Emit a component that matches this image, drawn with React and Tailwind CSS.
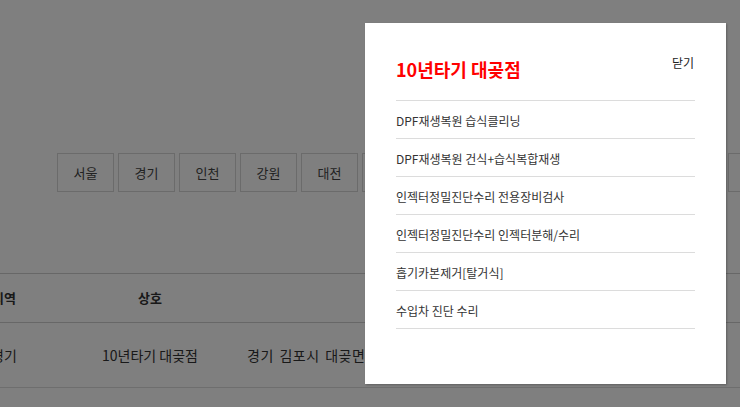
import { useState } from 'react';

const REGIONS = ['서울', '경기', '인천', '강원', '대전', '세종', '충남', '충북', '광주', '전남', '전북', '부산'];

const SERVICES = [
  'DPF재생복원 습식클리닝',
  'DPF재생복원 건식+습식복합재생',
  '인젝터정밀진단수리 전용장비검사',
  '인젝터정밀진단수리 인젝터분해/수리',
  '흡기카본제거[탈거식]',
  '수입차 진단 수리',
];

const FONT = { fontFamily: '"Noto Sans CJK KR", "Noto Sans", sans-serif' };

export default function App() {
  const [open, setOpen] = useState(true);

  return (
    <div className="relative w-[740px] h-[407px] overflow-hidden bg-white text-[#333]" style={FONT}>
      {/* page behind */}
      <div className="pt-[153px]">
        <div className="flex gap-[4px] pl-[57px] whitespace-nowrap">
          {REGIONS.map(r => (
            <div key={r} className="w-[57px] h-[39px] shrink-0 border border-[#d6d6d6] flex items-center justify-center text-[13px] text-[#444]">
              {r}
            </div>
          ))}
        </div>

        <div className="mt-[81px] -ml-[69px] w-[900px]">
          <div className="flex h-[50px] items-center border-t border-b border-[#cfcfcf] font-bold text-[13px]">
            <div className="w-[146px] text-center">지역</div>
            <div className="w-[146px] text-center">상호</div>
            <div className="w-[400px] text-center">주소</div>
          </div>
          <div className="flex h-[65px] items-center border-b border-[#dcdcdc] text-[14px]">
            <div className="w-[146px] text-center">경기</div>
            <div className="w-[146px] text-center">10년타기 대곶점</div>
            <div className="flex-1 pl-[24px] tracking-[0.5px] [word-spacing:2px]">경기 김포시 대곶면 대명항로 123</div>
          </div>
        </div>
      </div>

      {open && (
        <div className="absolute inset-0 bg-black/50">
          <div className="absolute left-[365px] top-[23px] w-[361px] h-[361px] bg-white shadow-[1px_1px_2px_rgba(0,0,0,0.25)] px-[31px]">
            <div className="flex items-start justify-between pt-[32px] pb-[17px] border-b border-[#dcdcdc] pr-[1px]">
              <h2 className="text-[18px] leading-[28px] font-bold text-[#ff0000]">10년타기 대곶점</h2>
              <button onClick={() => setOpen(false)} className="text-[12px] leading-[16px] text-[#222]">
                닫기
              </button>
            </div>
            <ul>
              {SERVICES.map(s => (
                <li key={s} className="h-[38px] flex items-center pt-[2px] border-b border-[#dcdcdc] text-[12px] text-[#333]">
                  {s}
                </li>
              ))}
            </ul>
          </div>
        </div>
      )}
    </div>
  );
}
